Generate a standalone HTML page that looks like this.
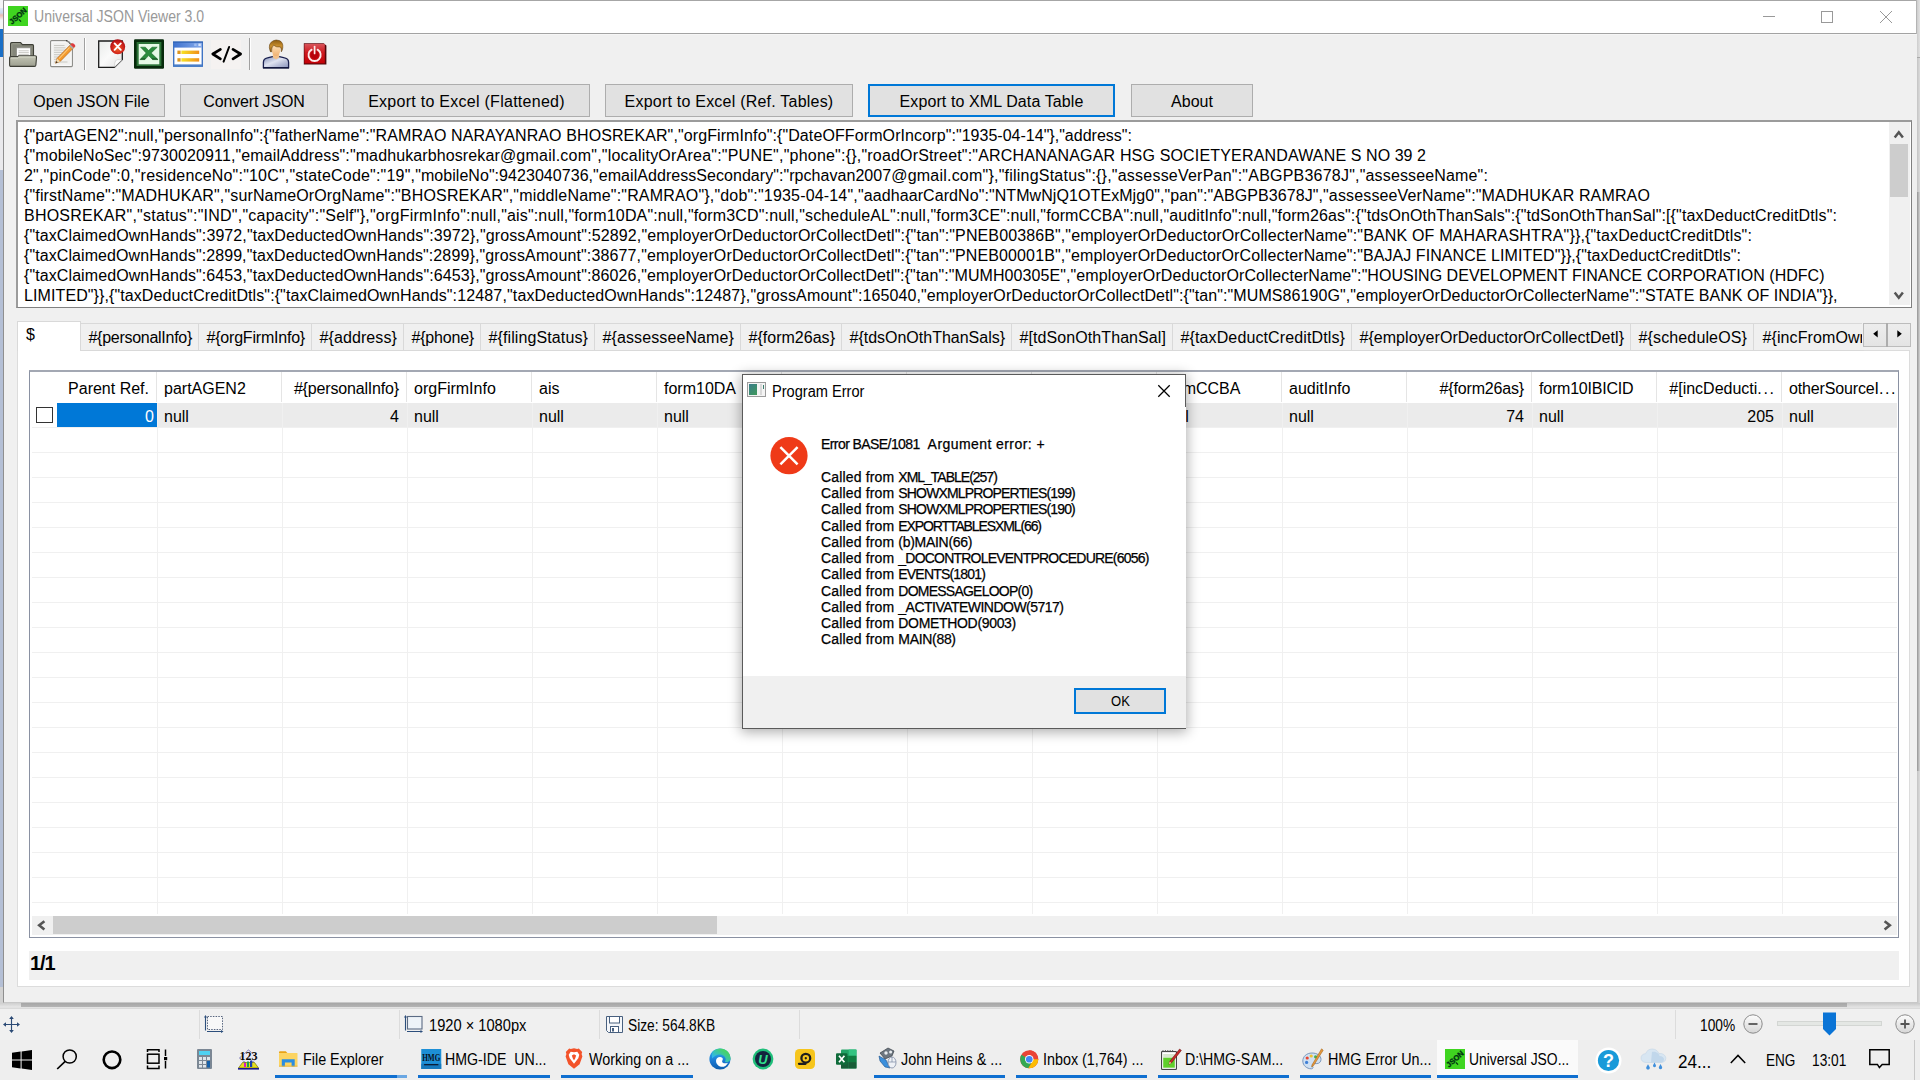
<!DOCTYPE html>
<html><head><meta charset="utf-8"><title>Universal JSON Viewer 3.0</title>
<style>
*{box-sizing:border-box;margin:0;padding:0}
html,body{width:1920px;height:1080px;overflow:hidden;background:#f0f0f0;font-family:"Liberation Sans",sans-serif;color:#000}
.a{position:absolute}
.t{position:absolute;white-space:pre;font-size:16px;line-height:20px;color:#000}
.btn{position:absolute;top:84px;height:33px;background:#e1e1e1;border:1px solid #adadad;font-size:16px;line-height:33px;text-align:center;white-space:pre}
.btn.f{border:2px solid #0078d7;line-height:31px}
.tab{position:absolute;top:323px;height:28px;background:#f0f0f0;border:1px solid #d9d9d9;border-left:none;font-size:16px;line-height:20px;padding:3.5px 0 0 7.5px;white-space:pre;overflow:hidden}
.hd{position:absolute;top:378.8px;font-size:16px;line-height:20px;white-space:pre}
.cl{position:absolute;top:406.5px;font-size:16px;line-height:20px;white-space:pre}
.sg{font-family:"Liberation Sans",sans-serif;position:absolute;white-space:pre;transform-origin:0 50%}
.tl{position:absolute;top:1049.5px;font-size:16px;line-height:20px;white-space:pre;transform-origin:0 50%;transform:scaleX(.93);color:#000}
.dt{position:absolute;left:821px;white-space:pre;font-size:14px;line-height:16.25px;color:#000;-webkit-text-stroke:.25px #000}
.ul{position:absolute;top:1075px;height:3px;background:#0f6fd0}
svg{position:absolute;overflow:visible}
</style></head><body>
<!-- background strip left of window -->
<div class="a" style="left:0;top:0;width:4px;height:1003px;background:#f4f4f6"></div>
<div class="a" style="left:0;top:8px;width:3px;height:12px;background:linear-gradient(#dfe9f6,#c9d9ee 40%,#e9b9b4 60%,#eef2f8)"></div>
<div class="a" style="left:0;top:29px;width:3px;height:28px;background:#1a6fc6"></div>
<div class="a" style="left:0;top:57px;width:3px;height:113px;background:#e9e9ec"></div>
<div class="a" style="left:0;top:170px;width:3px;height:817px;background:#b4bfd5"></div>
<div class="a" style="left:0;top:987px;width:3px;height:16px;background:#d2d2d2"></div>
<!-- main window -->
<div class="a" style="left:3px;top:0;width:1914px;height:1003px;background:#f0f0f0;border:1px solid #a6a6a6;border-right:none;border-bottom-color:#c8c8c8;border-left-color:#8f8f8f"></div>
<div class="a" style="left:4px;top:1px;width:1912px;height:32px;background:#fff"></div>
<div class="a" style="left:4px;top:33px;width:1913px;height:1px;background:#a3a3a3"></div>
<div class="a" style="left:1916px;top:0;width:1px;height:34px;background:#b4b4b4"></div>
<div class="a" style="left:4px;top:34px;width:1913px;height:1px;background:#f6f6f6"></div>
<div class="a" style="left:1917px;top:0;width:3px;height:57px;background:linear-gradient(to right,#cdcdcd,#e2e2e2)"></div>
<div class="a" style="left:1917px;top:57px;width:3px;height:946px;background:linear-gradient(to right,#c4c4c4,#dcdcdc)"></div>
<div class="a" style="left:1917px;top:192px;width:3px;height:579px;background:linear-gradient(to right,#9c9c9c 0,#a4a4a4 45%,#c6c6c6 55%,#cecece)"></div>
<div class="a" style="left:1917px;top:57px;width:3px;height:1px;background:#a8a8a8"></div>
<!-- app icon -->
<div class="a" style="left:8px;top:6px;width:20px;height:20px;background:#3fd520"></div>
<svg style="left:8px;top:6px" width="20" height="20" viewBox="0 0 20 20"><text x="10" y="12.6" text-anchor="middle" transform="rotate(-42 10 10)" font-family="Liberation Sans" font-weight="700" font-size="7.6" fill="#031" stroke="#031" stroke-width=".35">JSON</text><path d="M11 13.5l2 2.2" stroke="#031" stroke-width="1.2"/></svg>
<div class="sg" style="left:33.5px;top:6.5px;font-size:16px;line-height:20px;color:#999;transform:scaleX(.879)">Universal JSON Viewer 3.0</div>
<!-- caption buttons -->
<div class="a" style="left:1763px;top:16px;width:12px;height:1px;background:#999"></div>
<div class="a" style="left:1821px;top:11px;width:12px;height:12px;border:1px solid #999"></div>
<svg style="left:1880px;top:11px" width="12" height="12" viewBox="0 0 12 12"><path d="M0 0L12 12M12 0L0 12" stroke="#999" stroke-width="1" fill="none"/></svg>
<!-- toolbar icons -->
<!-- open folder -->
<svg style="left:9px;top:41px" width="28" height="26" viewBox="0 0 28 26"><defs><linearGradient id="ff" x1="0" y1="0" x2="0" y2="1"><stop offset="0" stop-color="#c4c6b6"/><stop offset="1" stop-color="#9d9f90"/></linearGradient></defs><path d="M1.6 2.6Q1.6 1.5 2.7 1.5H11.6L13.4 3.6H23.4Q24.5 3.6 24.5 4.7V18H1.6Z" fill="#84867a" stroke="#3d3e36" stroke-width="1.1"/><path d="M2.8 3V16M3.4 2.8H11" stroke="#a3a595" stroke-width=".8" fill="none"/><rect x="7.6" y="6.8" width="14" height="9" fill="#fff" stroke="#8d8e88" stroke-width=".8"/><path d="M9.6 9.8H19.8M9.6 11.6H19.8M9.6 13.4H19.8" stroke="#c4c4bf" stroke-width=".9"/><path d="M2 25.4Q.6 25.4 .6 24V17Q.6 15.6 2 15.6H8.6L9.6 14.7H26Q27.6 14.7 27.5 16.2L26.9 24Q26.8 25.4 25.4 25.4Z" fill="url(#ff)" stroke="#3d3e36" stroke-width="1.1"/><path d="M1.8 17H8.8L9.9 16H26.2" stroke="#d9dbcd" stroke-width=".9" fill="none"/></svg>
<!-- edit document -->
<svg style="left:49px;top:39px" width="28" height="29" viewBox="0 0 28 29"><path d="M2.6 1.6H17.4Q20.6 2.4 23.4 6.4V26.6Q23.4 27.6 22.4 27.6H2.6Q1.6 27.6 1.6 26.6V2.6Q1.6 1.6 2.6 1.6Z" fill="#f1f1ef" stroke="#8b8b87" stroke-width="1.1"/><path d="M17 1.6Q20.4 2.6 23.4 6.6" stroke="#2e2e2c" stroke-width="1.2" fill="none"/><rect x="3" y="3" width="19" height="23.2" fill="none" stroke="#fff" stroke-width=".8"/><path d="M5 6.5H15.5M5 8.8H16.5M5 11.1H17.5M5 13.4H17.5M5 15.7H14M5 18H12M5 20.3H10M5 23H18.5" stroke="#c9c9c4" stroke-width="1"/><path d="M22.6 4.6L25.8 7.6L11.2 22.4L6.6 24.2L8 19.4Z" fill="#f49a2c" stroke="#b5661a" stroke-width=".7"/><path d="M20.6 8.4L10 19.6" stroke="#fbc778" stroke-width="1.1"/><path d="M21.4 5.8L24.6 8.8L26.2 7.2Q26.6 6.4 25.6 5.4Q24.2 4 23.2 4.2Z" fill="#de3a40"/><path d="M20.2 7L23.4 10L24.6 8.8L21.4 5.8Z" fill="#a9acb0"/><path d="M6.6 24.2L8 19.4L11.2 22.4Z" fill="#f3ddb4"/><path d="M6.6 24.2L7.3 22L8.8 23.4Z" fill="#3a2a1a"/></svg>
<div class="a" style="left:84px;top:38px;width:1px;height:32px;background:#a0a0a0"></div>
<div class="a" style="left:85px;top:38px;width:1px;height:32px;background:#fff"></div>
<!-- new doc with red x -->
<svg style="left:97px;top:38px" width="29" height="31" viewBox="0 0 29 31"><defs><linearGradient id="pg" x1="0" y1="0" x2="1" y2="1"><stop offset="0" stop-color="#e9ebea"/><stop offset=".5" stop-color="#fafafa"/><stop offset="1" stop-color="#e2e2e2"/></linearGradient><radialGradient id="rx" cx=".5" cy=".62" r=".6"><stop offset="0" stop-color="#ee6a2a"/><stop offset=".55" stop-color="#d62a1c"/><stop offset="1" stop-color="#a80c12"/></radialGradient></defs><path d="M1.7 3H25.3V21.6L17.4 29.4H1.7Z" fill="url(#pg)" stroke="#1c1c1c" stroke-width="1.3"/><path d="M25 21.8Q20 21 18.6 22.6Q17.4 24.6 17.6 29Z" fill="#fdfdfd" stroke="#bdbdbd" stroke-width=".5"/><circle cx="20.7" cy="8.7" r="7.5" fill="url(#rx)"/><path d="M17.6 5.4L23.8 11.8M23.8 5.4L17.6 11.8" stroke="#fff" stroke-width="1.9" stroke-linecap="round"/></svg>
<!-- excel -->
<svg style="left:134px;top:39px" width="30" height="30" viewBox="0 0 30 30"><rect x="0" y=".3" width="30" height="29.5" rx="1.2" fill="#062a0b"/><rect x="2.6" y="3" width="24.8" height="24" fill="#2c7338"/><rect x="4.7" y="5" width="20.6" height="20.3" fill="#e6fae6"/><path d="M6.6 8.2H11.4L14.6 11.6L18 8.2H23.2L17.2 14L24 20.6H18.6L14.6 16.6L10.8 20.6H6L12.2 14Z" fill="#2a8c3c" stroke="#1d6a2a" stroke-width=".6"/><path d="M6 20.6H10.8L12 19.4H7.2ZM18.6 20.6H24L22.8 19.4H17.4Z" fill="#0f4a1a"/></svg>
<!-- form window -->
<svg style="left:173px;top:41px" width="30" height="26" viewBox="0 0 30 26"><defs><linearGradient id="tb" x1="0" y1="0" x2="1" y2="0"><stop offset="0" stop-color="#3f73cf"/><stop offset="1" stop-color="#86aaea"/></linearGradient><linearGradient id="yb" x1="0" y1="0" x2="1" y2="0"><stop offset="0" stop-color="#f7e224"/><stop offset="1" stop-color="#f08e1c"/></linearGradient></defs><rect x=".7" y="1.2" width="28.6" height="24" fill="#fff" stroke="#3f74c4" stroke-width="1.4"/><rect x="1" y="1.4" width="28" height="5.2" fill="url(#tb)"/><rect x="0" y=".6" width="30" height="1.1" fill="#2f62b4"/><rect x="1" y="23.4" width="28" height="2.2" fill="#4a7ec8"/><rect x="21.2" y="2.6" width="2.4" height="2.4" fill="#9fbdf0"/><rect x="25.4" y="2.6" width="2.4" height="2.4" fill="#d9e6fb"/><rect x="4.4" y="9.6" width="3.2" height="3.4" fill="#dd951e"/><rect x="8.4" y="9.6" width="17.8" height="3.4" fill="url(#yb)"/><rect x="4.4" y="17.2" width="3.2" height="3.4" fill="#dd951e"/><rect x="8.4" y="17.2" width="17.8" height="3.4" fill="url(#yb)"/></svg>
<!-- code icon -->
<div class="a" style="left:211px;top:40px;width:30px;height:29px;background:#f5f2f1"></div>
<svg style="left:211px;top:39px" width="31" height="30" viewBox="0 0 31 30"><g fill="none" stroke="#000" stroke-width="2.7" stroke-linejoin="round" stroke-linecap="round"><path d="M9.4 10.4L1.8 15L9.4 19.8"/><path d="M22 10.4L29.6 15L22 19.8"/><path d="M18.1 8L12.6 22.6" stroke-width="2"/></g></svg>
<div class="a" style="left:249px;top:38px;width:1px;height:32px;background:#a0a0a0"></div>
<div class="a" style="left:250px;top:38px;width:1px;height:32px;background:#fff"></div>
<!-- user -->
<svg style="left:262px;top:39px" width="28" height="30" viewBox="0 0 28 30"><defs><linearGradient id="ub" x1="0" y1="0" x2="1" y2="1"><stop offset="0" stop-color="#7f8bb5"/><stop offset=".45" stop-color="#dfe3f0"/><stop offset=".7" stop-color="#b5bcd6"/><stop offset="1" stop-color="#8a95bd"/></linearGradient><linearGradient id="uh" x1="0" y1="0" x2="0" y2="1"><stop offset="0" stop-color="#8a5a10"/><stop offset=".5" stop-color="#c98f2e"/><stop offset="1" stop-color="#8a5a14"/></linearGradient><linearGradient id="uf" x1="0" y1="0" x2="0" y2="1"><stop offset="0" stop-color="#ffe9c4"/><stop offset="1" stop-color="#f0b070"/></linearGradient></defs><path d="M1.4 28.6V23.4Q1.4 19.6 5.4 18.8L10.6 17.6H17.4L22.6 18.8Q26.6 19.6 26.6 23.4V28.6Z" fill="url(#ub)" stroke="#1b2250" stroke-width="1.3"/><path d="M1 28.9H27" stroke="#10163a" stroke-width="1.4"/><path d="M10.8 14.5H17.2V18.6L14 20.6L10.8 18.6Z" fill="#f2c08a"/><path d="M9.6 9Q9.6 5 14 5Q18.6 5 18.6 9.6Q18.6 13.4 16.8 15.4Q15.4 17 14 17Q12.6 17 11.2 15.4Q9.6 13.4 9.6 9Z" fill="url(#uf)"/><path d="M8.2 12.4Q5.4 4.6 11.2 1.8Q14 .2 17.4 1.6Q21.4 3.4 20.8 8.6Q20.6 11 19.4 12.8Q19.6 9.6 18.4 8Q14.4 8.6 11.6 6.2Q9.2 8.4 9.6 12.8Q8.8 13.2 8.2 12.4Z" fill="url(#uh)" stroke="#5a3608" stroke-width=".5"/></svg>
<!-- power -->
<svg style="left:303px;top:42px" width="25" height="24" viewBox="0 0 25 24"><defs><linearGradient id="pw" x1="0" y1="0" x2="0" y2="1"><stop offset="0" stop-color="#d9545a"/><stop offset=".45" stop-color="#cf1a20"/><stop offset="1" stop-color="#c40006"/></linearGradient></defs><path d="M.8 1.2H20.6L23.4 3.4V22.6H.8Z" fill="#52060a"/><rect x="1.4" y="1.8" width="20.4" height="19.6" fill="url(#pw)"/><circle cx="11.6" cy="12.8" r="4.2" fill="#b8000a"/><path d="M8.6 7.6A6.1 6.1 0 1 0 14.6 7.6" fill="none" stroke="#fbeaea" stroke-width="1.8" stroke-linecap="round"/><path d="M11.6 4.6V11.4" stroke="#fbeaea" stroke-width="1.7" stroke-linecap="round"/></svg>
<!-- buttons -->
<div class="btn" style="left:18px;width:147px">Open JSON File</div>
<div class="btn" style="left:180px;width:148px;letter-spacing:-.15px">Convert JSON</div>
<div class="btn" style="left:343px;width:247px;letter-spacing:.27px">Export to Excel (Flattened)</div>
<div class="btn" style="left:605px;width:248px;letter-spacing:.22px">Export to Excel (Ref. Tables)</div>
<div class="btn f" style="left:868px;width:247px;letter-spacing:.1px">Export to XML Data Table</div>
<div class="btn" style="left:1131px;width:122px">About</div>
<!-- textarea -->
<div class="a" style="left:16px;top:120px;width:1896px;height:188px;background:#fff;border:1px solid #808080;border-top:2px solid #9b9b9b;border-left:2px solid #9b9b9b"></div>
<div class="a" style="left:1889px;top:122px;width:21px;height:183px;background:#f0f0f0"></div>
<div class="a" style="left:1890px;top:144px;width:18px;height:53px;background:#cdcdcd"></div>
<svg style="left:1893px;top:130px" width="12" height="9" viewBox="0 0 12 9"><path d="M1.7 7.4L5.8 2.2L9.9 7.4" stroke="#555" stroke-width="2.5" fill="none"/></svg>
<svg style="left:1893px;top:291px" width="12" height="9" viewBox="0 0 12 9"><path d="M1.7 1.6L5.8 6.8L9.9 1.6" stroke="#555" stroke-width="2.5" fill="none"/></svg>
<div class="t" style="left:24px;top:125.5px"><span style="letter-spacing:0.1038px">{"partAGEN2":null,"personalInfo":{"fatherName":"RAMRAO </span><span style="letter-spacing:0.1030px">NARAYANRAO BHOSREKAR","orgFirmInfo":{"DateOFFormOrIncorp":</span><span style="letter-spacing:0.0125px">"1935-04-14"},"address":</span></div>
<div class="t" style="left:24px;top:145.5px"><span style="letter-spacing:0.1123px">{"mobileNoSec":9730020911,"emailAddress":"madhukarbhosrekar</span><span style="letter-spacing:0.2202px">@gmail.com","localityOrArea":"PUNE","phone":{},</span><span style="letter-spacing:0.1674px">"roadOrStreet":"ARCHANANAGAR HSG SOCIETYERANDAWANE </span><span style="letter-spacing:0.0497px">S NO 39 2</span></div>
<div class="t" style="left:24px;top:165.5px"><span style="letter-spacing:0.1977px">2","pinCode":0,"residenceNo":"10C","stateCode":"19",</span><span style="letter-spacing:0.0484px">"mobileNo":9423040736,"emailAddressSecondary":"rpchavan2007</span><span style="letter-spacing:0.2204px">@gmail.com"},"filingStatus":{},"assesseVerPan":"ABGPB3678J",</span><span style="letter-spacing:0.1454px">"assesseeName":</span></div>
<div class="t" style="left:24px;top:185.5px"><span style="letter-spacing:0.1445px">{"firstName":"MADHUKAR","surNameOrOrgName":"</span><span style="letter-spacing:0.1761px">BHOSREKAR","middleName":"RAMRAO"},"dob":"1935-04-14","</span><span style="letter-spacing:0.0791px">aadhaarCardNo":"NTMwNjQ1OTExMjg0","pan":"ABGPB3678J",</span><span style="letter-spacing:0.1467px">"assesseeVerName":"MADHUKAR RAMRAO</span></div>
<div class="t" style="left:24px;top:205.5px"><span style="letter-spacing:0.2282px">BHOSREKAR","status":"IND","capacity":"Self"},"orgFirmInfo":null,</span><span style="letter-spacing:0.1433px">"ais":null,"form10DA":null,"form3CD":null,"scheduleAL":null,</span><span style="letter-spacing:0.1003px">"form3CE":null,"formCCBA":null,"auditInfo":null,"form26as":</span><span style="letter-spacing:0.1298px">{"tdsOnOthThanSals":{"tdSonOthThanSal":[{"taxDeductCreditDtls":</span></div>
<div class="t" style="left:24px;top:225.5px"><span style="letter-spacing:0.0937px">{"taxClaimedOwnHands":3972,"taxDeductedOwnHands":</span><span style="letter-spacing:0.1256px">3972},"grossAmount":52892,"employerOrDeductorOrCollectDetl":</span><span style="letter-spacing:0.1143px">{"tan":"PNEB00386B","employerOrDeductorOrCollecterName":</span><span style="letter-spacing:0.1573px">"BANK OF MAHARASHTRA"}},{"taxDeductCreditDtls":</span></div>
<div class="t" style="left:24px;top:245.5px"><span style="letter-spacing:0.0846px">{"taxClaimedOwnHands":2899,"taxDeductedOwnHands":</span><span style="letter-spacing:0.1329px">2899},"grossAmount":38677,"employerOrDeductorOrCollectDetl":</span><span style="letter-spacing:0.1104px">{"tan":"PNEB00001B","employerOrDeductorOrCollecterName":</span><span style="letter-spacing:0.0760px">"BAJAJ FINANCE LIMITED"}},{"taxDeductCreditDtls":</span></div>
<div class="t" style="left:24px;top:265.5px"><span style="letter-spacing:0.0927px">{"taxClaimedOwnHands":6453,"taxDeductedOwnHands":</span><span style="letter-spacing:0.1192px">6453},"grossAmount":86026,"employerOrDeductorOrCollectDetl":</span><span style="letter-spacing:0.0884px">{"tan":"MUMH00305E","employerOrDeductorOrCollecterName":</span><span style="letter-spacing:0.0180px">"HOUSING DEVELOPMENT FINANCE CORPORATION (HDFC)</span></div>
<div class="t" style="left:24px;top:285.5px"><span style="letter-spacing:0.0978px">LIMITED"}},{"taxDeductCreditDtls":{"taxClaimedOwnHands":</span><span style="letter-spacing:0.1501px">12487,"taxDeductedOwnHands":12487},"grossAmount":</span><span style="letter-spacing:0.0895px">165040,"employerOrDeductorOrCollectDetl":{"tan":"MUMS86190G",</span><span style="letter-spacing:0.0300px">"employerOrDeductorOrCollecterName":"STATE BANK OF INDIA"}},</span></div>
<!-- tab control -->
<div class="a" style="left:17px;top:350px;width:1893px;height:637px;background:#fff;border:1px solid #dcdcdc"></div>
<div class="tab" style="left:81px;width:118px;letter-spacing:-0.277px">#{personalInfo}</div>
<div class="tab" style="left:199px;width:113px;letter-spacing:-0.206px">#{orgFirmInfo}</div>
<div class="tab" style="left:312px;width:92px;letter-spacing:0.099px">#{address}</div>
<div class="tab" style="left:404px;width:77px;letter-spacing:-0.197px">#{phone}</div>
<div class="tab" style="left:481px;width:114px;letter-spacing:0.110px">#{filingStatus}</div>
<div class="tab" style="left:595px;width:146px;letter-spacing:0.109px">#{assesseeName}</div>
<div class="tab" style="left:741px;width:101px;letter-spacing:0.020px">#{form26as}</div>
<div class="tab" style="left:842px;width:170px;letter-spacing:-0.008px">#{tdsOnOthThanSals}</div>
<div class="tab" style="left:1012px;width:161px;letter-spacing:0.084px">#[tdSonOthThanSal]</div>
<div class="tab" style="left:1173px;width:179px;letter-spacing:0.120px">#{taxDeductCreditDtls}</div>
<div class="tab" style="left:1352px;width:279px;letter-spacing:0.038px">#{employerOrDeductorOrCollectDetl}</div>
<div class="tab" style="left:1631px;width:123px;letter-spacing:0.135px">#{scheduleOS}</div>
<div class="tab" style="left:1754px;width:110px;letter-spacing:0.100px;padding-left:8.5px">#{incFromOwnHP}</div>
<div class="a" style="left:17px;top:321px;width:64px;height:30px;background:#fff;border:1px solid #d9d9d9;border-bottom:none"></div>
<div class="t" style="left:26px;top:324.5px">$</div>
<div class="a" style="left:1862px;top:322px;width:50px;height:28px;background:#f0f0f0"></div>
<div class="a" style="left:1863px;top:323px;width:48px;height:24px;background:linear-gradient(#ededed,#e4e4e4);border:1px solid #bcbcbc"></div>
<div class="a" style="left:1886px;top:323px;width:2px;height:24px;background:#adadad"></div>
<svg style="left:1872.6px;top:329.8px" width="5" height="8" viewBox="0 0 5 8"><path d="M4.7 0.2L0.2 3.8L4.7 7.6Z" fill="#000"/></svg>
<svg style="left:1896.6px;top:329.8px" width="5" height="8" viewBox="0 0 5 8"><path d="M0.3 0.2L4.8 3.8L0.3 7.6Z" fill="#000"/></svg>
<!-- grid -->
<div class="a" style="left:29px;top:370px;width:1870px;height:568px;background:#fff;border:1px solid #8a91a2;border-top:2px solid #a3a8b3"></div>
<div class="a" style="left:158px;top:403px;width:1739px;height:24px;background:#ebebeb"></div>
<div class="a" style="left:32px;top:427px;width:1865px;height:1px;background:#f0f0f0"></div>
<div class="a" style="left:32px;top:452px;width:1865px;height:1px;background:#f0f0f0"></div>
<div class="a" style="left:32px;top:477px;width:1865px;height:1px;background:#f0f0f0"></div>
<div class="a" style="left:32px;top:502px;width:1865px;height:1px;background:#f0f0f0"></div>
<div class="a" style="left:32px;top:527px;width:1865px;height:1px;background:#f0f0f0"></div>
<div class="a" style="left:32px;top:552px;width:1865px;height:1px;background:#f0f0f0"></div>
<div class="a" style="left:32px;top:577px;width:1865px;height:1px;background:#f0f0f0"></div>
<div class="a" style="left:32px;top:602px;width:1865px;height:1px;background:#f0f0f0"></div>
<div class="a" style="left:32px;top:627px;width:1865px;height:1px;background:#f0f0f0"></div>
<div class="a" style="left:32px;top:652px;width:1865px;height:1px;background:#f0f0f0"></div>
<div class="a" style="left:32px;top:677px;width:1865px;height:1px;background:#f0f0f0"></div>
<div class="a" style="left:32px;top:702px;width:1865px;height:1px;background:#f0f0f0"></div>
<div class="a" style="left:32px;top:727px;width:1865px;height:1px;background:#f0f0f0"></div>
<div class="a" style="left:32px;top:752px;width:1865px;height:1px;background:#f0f0f0"></div>
<div class="a" style="left:32px;top:777px;width:1865px;height:1px;background:#f0f0f0"></div>
<div class="a" style="left:32px;top:802px;width:1865px;height:1px;background:#f0f0f0"></div>
<div class="a" style="left:32px;top:827px;width:1865px;height:1px;background:#f0f0f0"></div>
<div class="a" style="left:32px;top:852px;width:1865px;height:1px;background:#f0f0f0"></div>
<div class="a" style="left:32px;top:877px;width:1865px;height:1px;background:#f0f0f0"></div>
<div class="a" style="left:32px;top:902px;width:1865px;height:1px;background:#f0f0f0"></div>
<div class="a" style="left:156px;top:372px;width:1px;height:30px;background:#e5e5e5"></div>
<div class="a" style="left:157px;top:403px;width:1px;height:511px;background:#f0f0f0"></div>
<div class="a" style="left:281px;top:372px;width:1px;height:30px;background:#e5e5e5"></div>
<div class="a" style="left:282px;top:403px;width:1px;height:511px;background:#f0f0f0"></div>
<div class="a" style="left:406px;top:372px;width:1px;height:30px;background:#e5e5e5"></div>
<div class="a" style="left:407px;top:403px;width:1px;height:511px;background:#f0f0f0"></div>
<div class="a" style="left:531px;top:372px;width:1px;height:30px;background:#e5e5e5"></div>
<div class="a" style="left:532px;top:403px;width:1px;height:511px;background:#f0f0f0"></div>
<div class="a" style="left:656px;top:372px;width:1px;height:30px;background:#e5e5e5"></div>
<div class="a" style="left:657px;top:403px;width:1px;height:511px;background:#f0f0f0"></div>
<div class="a" style="left:781px;top:372px;width:1px;height:30px;background:#e5e5e5"></div>
<div class="a" style="left:782px;top:403px;width:1px;height:511px;background:#f0f0f0"></div>
<div class="a" style="left:906px;top:372px;width:1px;height:30px;background:#e5e5e5"></div>
<div class="a" style="left:907px;top:403px;width:1px;height:511px;background:#f0f0f0"></div>
<div class="a" style="left:1031px;top:372px;width:1px;height:30px;background:#e5e5e5"></div>
<div class="a" style="left:1032px;top:403px;width:1px;height:511px;background:#f0f0f0"></div>
<div class="a" style="left:1156px;top:372px;width:1px;height:30px;background:#e5e5e5"></div>
<div class="a" style="left:1157px;top:403px;width:1px;height:511px;background:#f0f0f0"></div>
<div class="a" style="left:1281px;top:372px;width:1px;height:30px;background:#e5e5e5"></div>
<div class="a" style="left:1282px;top:403px;width:1px;height:511px;background:#f0f0f0"></div>
<div class="a" style="left:1406px;top:372px;width:1px;height:30px;background:#e5e5e5"></div>
<div class="a" style="left:1407px;top:403px;width:1px;height:511px;background:#f0f0f0"></div>
<div class="a" style="left:1531px;top:372px;width:1px;height:30px;background:#e5e5e5"></div>
<div class="a" style="left:1532px;top:403px;width:1px;height:511px;background:#f0f0f0"></div>
<div class="a" style="left:1656px;top:372px;width:1px;height:30px;background:#e5e5e5"></div>
<div class="a" style="left:1657px;top:403px;width:1px;height:511px;background:#f0f0f0"></div>
<div class="a" style="left:1781px;top:372px;width:1px;height:30px;background:#e5e5e5"></div>
<div class="a" style="left:1782px;top:403px;width:1px;height:511px;background:#f0f0f0"></div>
<div class="a" style="left:56.5px;top:403px;width:100.5px;height:24px;background:#0078d7"></div>
<div class="a" style="left:36px;top:407px;width:17px;height:16px;background:#fff;border:1px solid #333"></div>
<div class="hd" style="right:1771px">Parent Ref.</div>
<div class="cl" style="right:1766px;color:#fff">0</div>
<div class="hd" style="left:164px">partAGEN2</div>
<div class="cl" style="left:164px">null</div>
<div class="hd" style="right:1521px;letter-spacing:-.17px">#{personalInfo}</div>
<div class="cl" style="right:1521px">4</div>
<div class="hd" style="left:414px">orgFirmInfo</div>
<div class="cl" style="left:414px">null</div>
<div class="hd" style="left:539px">ais</div>
<div class="cl" style="left:539px">null</div>
<div class="hd" style="left:664px">form10DA</div>
<div class="cl" style="left:664px">null</div>
<div class="hd" style="left:789px">form3CD</div>
<div class="cl" style="left:789px">null</div>
<div class="hd" style="left:914px">scheduleAL</div>
<div class="cl" style="left:914px">null</div>
<div class="hd" style="left:1039px">form3CE</div>
<div class="cl" style="left:1039px">null</div>
<div class="hd" style="left:1164px">formCCBA</div>
<div class="cl" style="left:1164px">null</div>
<div class="hd" style="left:1289px">auditInfo</div>
<div class="cl" style="left:1289px">null</div>
<div class="hd" style="right:396px;letter-spacing:-.17px">#{form26as}</div>
<div class="cl" style="right:396px">74</div>
<div class="hd" style="left:1539px;letter-spacing:-.21px">form10IBICID</div>
<div class="cl" style="left:1539px">null</div>
<div class="hd" style="right:144.5px">#[incDeducti<span style="letter-spacing:1.6px">...</span></div>
<div class="cl" style="right:146px">205</div>
<div class="hd" style="left:1789px;letter-spacing:-.14px">otherSourceI<span style="letter-spacing:1.6px">...</span></div>
<div class="cl" style="left:1789px">null</div>
<div class="a" style="left:32px;top:916px;width:1865px;height:19px;background:#f0f0f0"></div>
<div class="a" style="left:53px;top:916px;width:664px;height:18px;background:#cdcdcd"></div>
<svg style="left:37px;top:920px" width="9" height="11" viewBox="0 0 9 11"><path d="M7.4 1.2L2.2 5.3L7.4 9.4" stroke="#555" stroke-width="2.6" fill="none"/></svg>
<svg style="left:1882.6px;top:920px" width="9" height="11" viewBox="0 0 9 11"><path d="M1.6 1.2L6.8 5.3L1.6 9.4" stroke="#555" stroke-width="2.6" fill="none"/></svg>
<div class="a" style="left:29px;top:951px;width:1870px;height:29px;background:#f0f0f0"></div>
<div class="t" style="left:30px;top:951px;font-size:20px;font-weight:700;line-height:24px;letter-spacing:-1.1px">1/1</div>
<!-- error dialog -->
<div class="a" style="left:742px;top:374px;width:444px;height:355px;background:#fff;border:1px solid #5a5a5a;border-right:none;box-shadow:0 2px 12px 1px rgba(0,0,0,.33)"></div>
<div class="a" style="left:1185px;top:374px;width:1px;height:33px;background:#5a5a5a"></div>
<div class="a" style="left:743px;top:676px;width:443px;height:52px;background:#f0f0f0"></div>
<!-- dialog icon -->
<div class="a" style="left:747px;top:382px;width:19px;height:15px;background:#f4f4f4;border:1px solid #9b9b9b"></div>
<div class="a" style="left:749px;top:384px;width:8px;height:11px;background:linear-gradient(135deg,#3a7d8c,#3f9a5a)"></div>
<div class="a" style="left:760px;top:384px;width:2px;height:11px;background:#d9d9d9"></div>
<div class="a" style="left:763px;top:385px;width:1px;height:4px;background:#3a7d6c"></div>
<div class="sg" style="left:772px;top:381.5px;font-size:16px;line-height:20px;transform:scaleX(.912)">Program Error</div>
<svg style="left:1158px;top:385px" width="12" height="12" viewBox="0 0 12 12"><path d="M0.3 0.3L11.7 11.7M11.7 0.3L0.3 11.7" stroke="#000" stroke-width="1.25" fill="none"/></svg>
<!-- red error icon -->
<svg style="left:770px;top:437px" width="38" height="38" viewBox="0 0 38 38"><circle cx="19" cy="18.7" r="18.6" fill="#ef3a18"/><path d="M10.4 10.1L27.6 27.3M27.6 10.1L10.4 27.3" stroke="#fff" stroke-width="2.5" fill="none"/></svg>
<!--DIALOGTEXT-->
<!-- OK button -->
<div class="a" style="left:1074px;top:688px;width:92px;height:26px;background:#e1e1e1;border:2px solid #0078d7"></div>
<div class="sg" style="left:1111px;top:691px;font-size:14px;line-height:20px;transform:scaleX(.93)">OK</div>
<div class="dt" style="top:436.3px"><span style="letter-spacing:-0.576px">Error BASE/1081</span><span style="letter-spacing:0.429px">  Argument error: +</span></div>
<div class="dt" style="top:468.80px"><span style="letter-spacing:0.153px">Called from </span><span style="letter-spacing:-1.005px">XML_TABLE(257)</span></div>
<div class="dt" style="top:485.05px"><span style="letter-spacing:0.153px">Called from </span><span style="letter-spacing:-0.837px">SHOWXMLPROPERTIES(199)</span></div>
<div class="dt" style="top:501.30px"><span style="letter-spacing:0.153px">Called from </span><span style="letter-spacing:-0.837px">SHOWXMLPROPERTIES(190)</span></div>
<div class="dt" style="top:517.55px"><span style="letter-spacing:0.153px">Called from </span><span style="letter-spacing:-1.107px">EXPORTTABLESXML(66)</span></div>
<div class="dt" style="top:533.80px"><span style="letter-spacing:0.153px">Called from </span><span style="letter-spacing:-0.292px">(b)MAIN(66)</span></div>
<div class="dt" style="top:550.05px"><span style="letter-spacing:0.153px">Called from </span><span style="letter-spacing:-0.784px">_DOCONTROLEVENTPROCEDURE(6056)</span></div>
<div class="dt" style="top:566.30px"><span style="letter-spacing:0.153px">Called from </span><span style="letter-spacing:-0.807px">EVENTS(1801)</span></div>
<div class="dt" style="top:582.55px"><span style="letter-spacing:0.153px">Called from </span><span style="letter-spacing:-0.766px">DOMESSAGELOOP(0)</span></div>
<div class="dt" style="top:598.80px"><span style="letter-spacing:0.153px">Called from </span><span style="letter-spacing:-0.522px">_ACTIVATEWINDOW(5717)</span></div>
<div class="dt" style="top:615.05px"><span style="letter-spacing:0.153px">Called from </span><span style="letter-spacing:-0.324px">DOMETHOD(9003)</span></div>
<div class="dt" style="top:631.30px"><span style="letter-spacing:0.153px">Called from </span><span style="letter-spacing:-0.312px">MAIN(88)</span></div>
<!-- below window: shadow + other app status bar -->
<div class="a" style="left:0;top:1003px;width:1920px;height:77px;background:#f0f0f0"></div>
<div class="a" style="left:21px;top:1003px;width:1829px;height:4px;background:linear-gradient(#a6a6a6,#b4b4b4)"></div><div class="a" style="left:0;top:1007px;width:1920px;height:1px;background:#e2e2e2"></div>
<div class="a" style="left:0;top:1003px;width:21px;height:4px;background:linear-gradient(#cfcfcf,#e6e6e6)"></div>
<div class="a" style="left:1847px;top:1003px;width:73px;height:4px;background:linear-gradient(#c8c8c8,#e2e2e2)"></div>
<div class="a" style="left:0;top:1008px;width:1920px;height:1px;background:#dadada"></div>
<div class="a" style="left:199px;top:1010px;width:1px;height:29px;background:#dcdcdc"></div>
<div class="a" style="left:399px;top:1010px;width:1px;height:29px;background:#dcdcdc"></div>
<div class="a" style="left:599px;top:1010px;width:1px;height:29px;background:#dcdcdc"></div>
<div class="a" style="left:799px;top:1010px;width:1px;height:29px;background:#dcdcdc"></div>
<div class="a" style="left:1675px;top:1010px;width:1px;height:29px;background:#dcdcdc"></div>
<!-- move icon -->
<svg style="left:3px;top:1016px" width="17" height="17" viewBox="0 0 17 17"><path d="M8.5 1.5V15.5M1.5 8.5H15.5" stroke="#2b4a75" stroke-width="1.15" fill="none"/><path d="M8.5 0L6.2 3H10.8ZM8.5 17L6.2 14H10.8ZM0 8.5L3 6.2V10.8ZM17 8.5L14 6.2V10.8Z" fill="#2b4a75"/></svg>
<!-- selection icon -->
<svg style="left:204px;top:1015px" width="20" height="18" viewBox="0 0 20 18"><rect x="3.5" y="1.5" width="15" height="13" fill="#f8f8f8" stroke="#56647e" stroke-width="1" stroke-dasharray="1.5 1.2"/><path d="M1.5 1V15.5M3 16.5H18.5" stroke="#2d4f7c" stroke-width="1.1" fill="none"/><path d="M1.5 0L0 2.5H3ZM19.5 16.5L17 15V18Z" fill="#2d4f7c"/></svg>
<!-- image size icon -->
<svg style="left:404px;top:1015px" width="20" height="18" viewBox="0 0 20 18"><rect x="3.5" y="1.5" width="14.5" height="12.5" fill="#eef3f8" stroke="#5b6b84" stroke-width="1.1"/><path d="M1.5 1V15.5M3 16.5H18" stroke="#2d4f7c" stroke-width="1.1" fill="none"/><path d="M1.5 0L0 2.5H3ZM19 16.5L16.5 15V18Z" fill="#2d4f7c"/></svg>
<div class="sg" style="left:428.5px;top:1015.8px;font-size:16px;line-height:20px;transform:scaleX(0.916)">1920 × 1080px</div>
<!-- save icon -->
<svg style="left:606px;top:1016px" width="17" height="17" viewBox="0 0 17 17"><path d="M0.5 0.5H16.5V16.5H2.5L0.5 14.5Z" fill="#f4f6f9" stroke="#48607f" stroke-width="1"/><rect x="3.5" y="0.5" width="10" height="6.5" fill="#fff" stroke="#48607f" stroke-width="1"/><rect x="4.5" y="10.5" width="8" height="6" fill="#fff" stroke="#48607f" stroke-width="1"/><rect x="6" y="12" width="2" height="3.5" fill="#48607f"/></svg>
<div class="sg" style="left:628px;top:1015.8px;font-size:16px;line-height:20px;transform:scaleX(0.859)">Size: 564.8KB</div>
<!-- zoom controls -->
<div class="sg" style="left:1699.5px;top:1015.8px;font-size:16px;line-height:20px;transform:scaleX(0.858)">100%</div>
<svg style="left:1743px;top:1014px" width="20" height="20" viewBox="0 0 20 20"><defs><linearGradient id="zg" x1="0" y1="0" x2="0" y2="1"><stop offset="0" stop-color="#fdfdfd"/><stop offset="1" stop-color="#d6d6d6"/></linearGradient></defs><circle cx="10" cy="10" r="9.2" fill="url(#zg)" stroke="#8c8c8c" stroke-width="1"/><path d="M5.5 10H14.5" stroke="#555" stroke-width="1.8"/></svg>
<div class="a" style="left:1777px;top:1021px;width:105px;height:5px;background:#e4e7e4;border:1px solid #d3d6d3"></div>
<svg style="left:1823px;top:1012px" width="13" height="24" viewBox="0 0 13 24"><path d="M0 0.5H13V17L6.5 23.5L0 17Z" fill="#0a74d6"/></svg>
<svg style="left:1895px;top:1014px" width="20" height="20" viewBox="0 0 20 20"><circle cx="10" cy="10" r="9.2" fill="url(#zg)" stroke="#8c8c8c" stroke-width="1"/><path d="M5.5 10H14.5M10 5.5V14.5" stroke="#555" stroke-width="1.8"/></svg>
<!-- taskbar -->
<div class="a" style="left:0;top:1040px;width:1920px;height:40px;background:#eeeeee"></div>
<div class="a" style="left:1437px;top:1040px;width:141px;height:36px;background:#fafafa"></div>
<!-- start -->
<svg style="left:12px;top:1050px" width="20" height="20" viewBox="0 0 20 20"><path d="M0 2.8L8.6 1.6V9.5H0ZM9.6 1.45L20 0V9.5H9.6ZM0 10.5H8.6V18.4L0 17.2ZM9.6 10.5H20V20L9.6 18.55Z" fill="#000"/></svg>
<!-- search -->
<svg style="left:56px;top:1048px" width="22" height="22" viewBox="0 0 22 22"><circle cx="13.7" cy="8.5" r="6.6" fill="none" stroke="#000" stroke-width="1.5"/><path d="M9.2 13.4L1.2 21" stroke="#000" stroke-width="1.7"/></svg>
<!-- cortana -->
<svg style="left:101px;top:1049px" width="22" height="22" viewBox="0 0 22 22"><circle cx="11" cy="10.8" r="8.3" fill="none" stroke="#000" stroke-width="2.6"/></svg>
<!-- task view -->
<svg style="left:146px;top:1049px" width="22" height="21" viewBox="0 0 22 21"><g fill="none" stroke="#000" stroke-width="1.5"><rect x="1.5" y="5.2" width="11.5" height="9"/><path d="M1.5 3V0.8H13V3M1.5 16.6V19.4H13V16.6M19.5 0.5V7M19.5 12V19.5"/></g><rect x="18" y="8" width="3.2" height="3.2" fill="#000"/></svg>
<!-- calculator -->
<svg style="left:197px;top:1049px" width="16" height="20" viewBox="0 0 16 20"><rect x="0" y="0" width="15" height="20" rx="1" fill="#7b8794"/><rect x="2" y="2" width="11" height="4" fill="#4fd1f1"/><g fill="#dfe5ea"><rect x="2" y="8" width="3" height="3"/><rect x="6" y="8" width="3" height="3"/><rect x="10" y="8" width="3" height="3"/><rect x="2" y="12" width="3" height="3"/><rect x="6" y="12" width="3" height="3"/><rect x="2" y="16" width="3" height="2.5"/><rect x="6" y="16" width="3" height="2.5"/></g><rect x="10" y="12" width="3" height="6.5" fill="#155fa8"/></svg>
<!-- 123 icon -->
<svg style="left:238px;top:1049px" width="21" height="21" viewBox="0 0 21 21"><path d="M10.5 1L19.5 9L10.5 16L1.5 9Z" fill="#e9e6f5" stroke="#5a55a8" stroke-width=".8"/><path d="M0.5 19L4.5 13.5H16.5L20.5 19Z" fill="#e8df1c" stroke="#5c5a00" stroke-width=".6"/><rect x="0" y="19" width="21" height="1.6" fill="#1a1a8a"/><rect x="6" y="14" width="2" height="4" fill="#d518c8"/><rect x="9" y="12.5" width="2" height="5.5" fill="#1da24a"/><rect x="12" y="11" width="2.2" height="7" fill="#1c3fb0"/><text x="10.5" y="11.2" text-anchor="middle" font-family="Liberation Serif" font-weight="700" font-size="12.5" fill="#0a0a0a" stroke="#f4f4f4" stroke-width=".9" paint-order="stroke" textLength="18" lengthAdjust="spacingAndGlyphs">123</text></svg>
<!-- file explorer -->
<svg style="left:279px;top:1051px" width="19" height="16" viewBox="0 0 19 16"><path d="M0 1.2Q0 .2 1 .2H6.8L8.4 2H0Z" fill="#e8a317"/><rect x="0" y="2" width="18.5" height="13.5" rx=".6" fill="#fcd462"/><path d="M2.8 15.5V8.3H15.7V15.5H12.6V11.4H5.9V15.5Z" fill="#2a8de2"/><rect x="0" y="14.7" width="18.5" height=".9" fill="#e6b43a"/></svg>
<div class="tl" style="left:302.5px;transform:scaleX(0.896)">File Explorer</div>
<div class="ul" style="left:275px;width:122px"></div><div class="ul" style="left:397px;width:10px;background:#6aa7e3"></div>
<!-- HMG-IDE -->
<svg style="left:420.5px;top:1049px" width="20.5" height="20" viewBox="0 0 21 21"><rect width="21" height="21" fill="#1d8fd6"/><rect x="0" y="15.5" width="21" height="5.5" fill="#1679bd"/><text x="10.5" y="12.5" text-anchor="middle" font-family="Liberation Serif" font-weight="700" font-size="11.5" fill="#0a1020" textLength="19" lengthAdjust="spacingAndGlyphs">HMG</text><path d="M3 16.5H18" stroke="#0a1020" stroke-width="1.2"/></svg>
<div class="tl" style="left:445px;transform:scaleX(0.885)">HMG-IDE  UN...</div>
<div class="ul" style="left:418px;width:132px"></div>
<!-- brave -->
<svg style="left:565px;top:1048px" width="18" height="21" viewBox="0 0 18 21"><path d="M9 .3L12.2 1L13.8 .4L17.2 4L16.6 6L17.4 8.4L14.6 16.3L9 20.7L3.4 16.3L.6 8.4L1.4 6L.8 4L4.2 .4L5.8 1Z" fill="#f3532a"/><path d="M9 4.2L12.3 3.8L14.3 6.8L13.3 10.2L9 15.8L4.7 10.2L3.7 6.8L5.7 3.8Z" fill="#fff"/><path d="M9 6.2L11.2 7.6L10.2 10.2L9 12.6L7.8 10.2L6.8 7.6Z" fill="#f3532a"/></svg>
<div class="tl" style="left:588.5px;transform:scaleX(0.896)">Working on a ...</div>
<div class="ul" style="left:561px;width:132px"></div>
<!-- edge -->
<svg style="left:709px;top:1048px" width="22" height="22" viewBox="0 0 22 22"><defs><linearGradient id="eg" x1="0" y1="0" x2="0" y2="1"><stop offset="0" stop-color="#2fb7ee"/><stop offset=".6" stop-color="#1a78d2"/><stop offset="1" stop-color="#0d5cab"/></linearGradient><linearGradient id="eg2" x1="0" y1="1" x2="1" y2="0"><stop offset=".2" stop-color="#2fb7ee"/><stop offset=".75" stop-color="#46d26a"/></linearGradient></defs><circle cx="11" cy="11" r="10.6" fill="url(#eg)"/><path d="M4.2 3A10.6 10.6 0 0 1 21.6 10.4C21.4 13.4 18.6 14.6 15.8 14C18.4 10.4 15 6.4 11 6.4C7.6 6.4 5 8.2 3.2 10.6C2.6 8 3 5 4.2 3Z" fill="url(#eg2)"/><path d="M7 12.9C7 10.6 8.9 9 11 9C12.9 9 13.8 10 13.8 11C13.8 12 13.1 12.7 13.1 13.5C13.1 15.1 15.7 16 19 14.7C17.4 18.2 14.2 19.3 11.9 18.7C9 17.9 7 15.6 7 12.9Z" fill="#fff"/></svg>
<!-- iobit -->
<svg style="left:752px;top:1048px" width="22" height="22" viewBox="0 0 22 22"><circle cx="11" cy="11" r="10.4" fill="#1fbf7a"/><circle cx="11" cy="11" r="8" fill="#14243e"/><text x="11" y="15.6" text-anchor="middle" font-family="Liberation Sans" font-style="italic" font-weight="700" font-size="13" fill="#2fe08c">U</text></svg>
<!-- yellow app -->
<svg style="left:795px;top:1049px" width="20" height="20" viewBox="0 0 20 20"><rect width="20" height="20" rx="4.5" fill="#f6c51c"/><circle cx="10.8" cy="9.2" r="4.4" fill="none" stroke="#1d1d1d" stroke-width="2.3"/><path d="M4 14.8H10.5M10.8 9.2V9.3" stroke="#1d1d1d" stroke-width="2.3" stroke-linecap="round"/></svg>
<!-- excel -->
<svg style="left:836px;top:1049px" width="21" height="20" viewBox="0 0 21 20"><rect x="5" y=".5" width="15.5" height="19" rx="1" fill="#21a366"/><rect x="12.7" y=".5" width="7.8" height="6.3" fill="#33c481"/><rect x="12.7" y="6.8" width="7.8" height="6.3" fill="#107c41"/><rect x="12.7" y="13.1" width="7.8" height="6.4" fill="#185c37"/><rect x="5" y="6.8" width="7.7" height="6.3" fill="#107c41"/><rect x="5" y="13.1" width="7.7" height="6.4" fill="#185c37"/><rect x="0" y="4.3" width="11.4" height="11.4" rx="1" fill="#0f6b3a"/><path d="M3 6.8L8.4 13.2M8.4 6.8L3 13.2" stroke="#fff" stroke-width="1.7"/></svg>
<!-- john heins -->
<svg style="left:877px;top:1047px" width="21" height="23" viewBox="0 0 21 23"><path d="M3 6L11 1L17 4L15 9L8 12Z" fill="#6d7680" stroke="#3a4048" stroke-width=".7"/><circle cx="9" cy="6" r="1.7" fill="#e9edf0"/><circle cx="13.6" cy="5" r="1.5" fill="#e9edf0"/><path d="M2 9L9 13L13 21L8 20L3 14Z" fill="#3b8fdc" stroke="#1b4f8a" stroke-width=".6"/><ellipse cx="15" cy="15.5" rx="4" ry="5.5" fill="#eef1f6" stroke="#7a86a0" stroke-width=".8"/><path d="M15 10V15M11.2 15H18.8" stroke="#7a86a0" stroke-width=".7"/></svg>
<div class="tl" style="left:901px;transform:scaleX(0.896)">John Heins &amp; ...</div>
<div class="ul" style="left:874px;width:131px"></div>
<!-- chrome -->
<svg style="left:1019.5px;top:1050px" width="18.5" height="18.5" viewBox="0 0 21 21"><circle cx="10.5" cy="10.5" r="10.3" fill="#e94335"/><path d="M10.5 10.5L1.6 5.4A10.3 10.3 0 0 0 9.5 20.75L15 11Z" fill="#34a853"/><path d="M10.5 10.5H20.8A10.3 10.3 0 0 1 9.5 20.75L14.8 12Z" fill="#fbbc05"/><path d="M10.5 .2A10.3 10.3 0 0 1 19.4 5.4H10.5Z" fill="#e94335"/><circle cx="10.5" cy="10.5" r="4.8" fill="#fff"/><circle cx="10.5" cy="10.5" r="3.8" fill="#4285f4"/></svg>
<div class="tl" style="left:1043px;transform:scaleX(0.896)">Inbox (1,764) ...</div>
<div class="ul" style="left:1016px;width:131px"></div>
<!-- notepad-ish -->
<svg style="left:1161px;top:1048px" width="21" height="22" viewBox="0 0 21 22"><path d="M.6 3.6H15.4V21.4H.6Z" fill="#fff" stroke="#333" stroke-width="1"/><path d="M2 3.6V2M4.4 3.6V2M6.8 3.6V2M9.2 3.6V2M11.6 3.6V2" stroke="#555" stroke-width=".9"/><rect x="2.2" y="9.5" width="11.6" height="10.2" fill="#5fcf2a"/><rect x="2.2" y="6" width="11.6" height="3.4" fill="#d9e6d0"/><path d="M18.6 1L20.4 2.4L10.4 15L8 16.4L8.6 13.6Z" fill="#c62828" stroke="#5d1010" stroke-width=".5"/><path d="M8 16.4L8.6 13.6L10.4 15Z" fill="#f1d9a0"/></svg>
<div class="tl" style="left:1185px;transform:scaleX(0.884)">D:\HMG-SAM...</div>
<div class="ul" style="left:1158px;width:131px"></div>
<!-- palette -->
<svg style="left:1302px;top:1048px" width="22" height="22" viewBox="0 0 22 22"><path d="M10 5C4.5 5 .8 8.6.8 13C.8 17.4 4.6 20.8 9.4 20.8C11 20.8 11.4 19.4 10.6 18.4C9.8 17.2 10.4 15.6 12.2 15.6H14.8C17.4 15.6 19 13.6 19 11.4C19 7.6 15 5 10 5Z" fill="#cfe0f2" stroke="#6f8fb5" stroke-width=".9"/><circle cx="5.2" cy="10" r="1.6" fill="#e8452f"/><circle cx="9.2" cy="8" r="1.6" fill="#f2c230"/><circle cx="13.6" cy="8.8" r="1.6" fill="#45b04a"/><circle cx="4.6" cy="14.4" r="1.6" fill="#3f7fd6"/><path d="M19.6 .8L21.2 2.2L11.6 17.6L9.6 19L10.2 16.6Z" fill="#e79a3c" stroke="#9a5a12" stroke-width=".5"/></svg>
<div class="tl" style="left:1327.5px;transform:scaleX(0.896)">HMG Error Un...</div>
<div class="ul" style="left:1300px;width:131px"></div>
<!-- universal json (active) -->
<div class="a" style="left:1445px;top:1049px;width:20px;height:20px;background:#3fd520"></div>
<svg style="left:1445px;top:1049px" width="20" height="20" viewBox="0 0 20 20"><text x="10" y="12.6" text-anchor="middle" transform="rotate(-42 10 10)" font-family="Liberation Sans" font-weight="700" font-size="7.6" fill="#031" stroke="#031" stroke-width=".35">JSON</text><path d="M11 13.5l2 2.2" stroke="#031" stroke-width="1.2"/></svg>
<div class="tl" style="left:1469px;transform:scaleX(0.867)">Universal JSO...</div>
<div class="ul" style="left:1437px;width:141px"></div>
<!-- help -->
<svg style="left:1595px;top:1047px" width="27" height="27" viewBox="0 0 27 27"><circle cx="13.5" cy="13.5" r="13" fill="#fff"/><circle cx="13.5" cy="13.5" r="10.6" fill="#189ad9"/><text x="13.5" y="20" text-anchor="middle" font-family="Liberation Sans" font-weight="700" font-size="18" fill="#fff">?</text></svg>
<!-- weather -->
<svg style="left:1640px;top:1048px" width="27" height="24" viewBox="0 0 27 24"><path d="M6.5 14.5C2.8 14.5 1 12.4 1 10C1 7.4 3.2 5.6 5.6 5.8C6.6 2.6 9.4 1 12.2 1C15.6 1 18 3 18.8 5.6C22.6 5 25.8 7.2 25.8 10.4C25.8 13 23.6 14.5 21 14.5Z" fill="#d8e6f2" stroke="#c2d5e6" stroke-width=".6"/><path d="M12 4C15 3 19 5 19.5 8C22 8 24 9.4 24 11.4C24 13 22.6 14.5 20.6 14.5H11Z" fill="#bcd3e8" opacity=".8"/><g fill="#3f8fdc"><path d="M8 16.2L9.6 19A1.8 1.8 0 1 1 6.4 19Z"/><path d="M14.5 14.6L15.8 17A1.5 1.5 0 1 1 13.2 17Z"/><path d="M20.5 16L22 18.8A1.7 1.7 0 1 1 19 18.8Z"/></g></svg>
<div class="sg" style="left:1678px;top:1050px;font-size:19px;line-height:24px;transform:scaleX(.9)">24...</div>
<svg style="left:1730px;top:1054px" width="16" height="10" viewBox="0 0 16 10"><path d="M.8 9L8 1.4L15.2 9" fill="none" stroke="#000" stroke-width="1.5"/></svg>
<div class="tl" style="top:1050.5px;left:1766px;transform:scaleX(0.848)">ENG</div>
<div class="tl" style="top:1050.5px;left:1811.5px;transform:scaleX(0.858)">13:01</div>
<svg style="left:1869px;top:1049px" width="21" height="20" viewBox="0 0 21 20"><path d="M.8 .8H20.2V15.4H13.2L10.4 18.6L8.4 15.4H.8Z" fill="none" stroke="#000" stroke-width="1.5"/></svg>
<div class="a" style="left:1914px;top:1040px;width:1px;height:40px;background:#c8c8c8"></div>
</body></html>
